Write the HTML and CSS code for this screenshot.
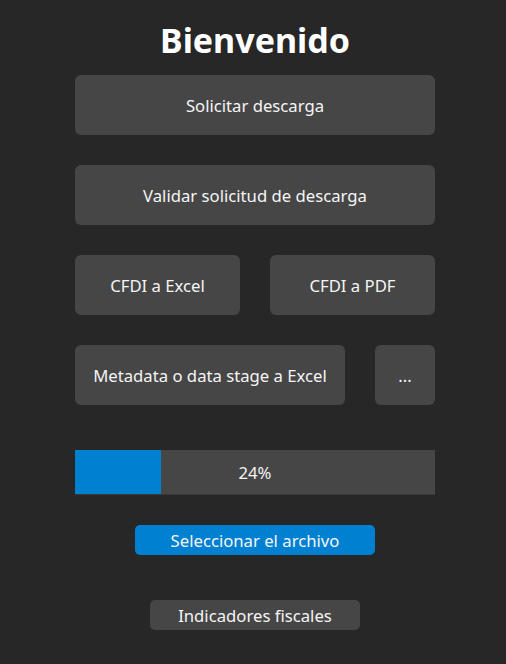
FILE: index.html
```html
<!DOCTYPE html>
<html lang="es">
<head>
    <meta charset="UTF-8">
    <meta name="viewport" content="width=device-width, initial-scale=1.0">
    <title>Bienvenido</title>
    <link rel="stylesheet" href="styles.css">
</head>
<body>
    <div class="container">
        <h1>Bienvenido</h1>
        <button class="btn">Solicitar descarga</button>
        <button class="btn">Validar solicitud de descarga</button>
        <div class="row">
            <button class="btn half">CFDI a Excel</button>
            <button class="btn half">CFDI a PDF</button>
        </div>
        <div class="row">
            <button class="btn wide">Metadata o data stage a Excel</button>
            <button class="btn small">...</button>
        </div>
        <div class="progress">
            <div class="progress-fill" style="width: 24%"></div>
            <span class="progress-text">24%</span>
        </div>
        <button class="btn-file">Seleccionar el archivo</button>
        <button class="btn-fiscal">Indicadores fiscales</button>
    </div>
</body>
</html>
```

FILE: styles.css
```css
body {
    font-family: "Noto Sans", "Open Sans", sans-serif;
    background-color: #272727;
    color: #f5f5f5;
    margin: 0;
    padding-left: 4px;
}
.container {
    width: 360px;
    margin: 0 auto;
    padding-top: 17px;
    display: flex;
    flex-direction: column;
    align-items: center;
}
h1 {
    font-size: 34px;
    font-weight: bold;
    color: #ffffff;
    margin: 0;
    height: 58px;
    line-height: 46px;
}
button {
    font-family: inherit;
    color: #f5f5f5;
    border: none;
    cursor: pointer;
}
.btn {
    width: 360px;
    height: 60px;
    background-color: #464646;
    border-radius: 6px;
    font-size: 16.7px;
    margin-bottom: 30px;
}
.row {
    width: 360px;
    display: flex;
    justify-content: space-between;
}
.half {
    width: 165px;
}
.wide {
    width: 270px;
}
.small {
    width: 60px;
}
.progress {
    position: relative;
    width: 360px;
    height: 44px;
    margin-top: 15px;
    background-color: #464646;
    border-bottom: 1px solid #3a3a3a;
    display: flex;
    align-items: center;
    justify-content: center;
}
.progress-fill {
    position: absolute;
    left: 0;
    top: 0;
    bottom: 0;
    background-color: #0080d0;
}
.progress-text {
    position: relative;
    font-size: 16.7px;
}
.btn-file {
    width: 240px;
    height: 30px;
    margin-top: 30px;
    background-color: #0080d0;
    border-radius: 5px;
    font-size: 16.7px;
}
.btn-fiscal {
    width: 210px;
    height: 30px;
    margin-top: 45px;
    background-color: #464646;
    border-radius: 5px;
    font-size: 16.7px;
}
```
